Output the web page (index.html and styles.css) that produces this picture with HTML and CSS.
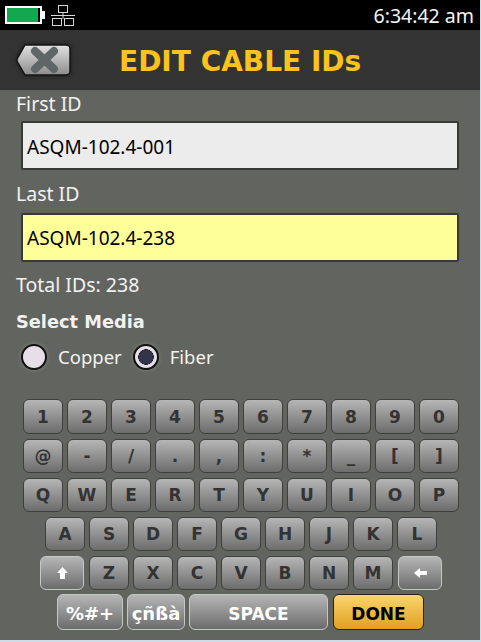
FILE: index.html
```html
<!DOCTYPE html>
<html lang="en">
<head>
  <meta charset="UTF-8">
  <title>Edit Cable IDs</title>
  <link rel="stylesheet" href="styles.css">
</head>
<body>
  <div class="status-bar">
    <div class="battery"><div class="battery-fill"></div></div>
    <svg class="network" width="25" height="21" viewBox="0 0 25 21" fill="none" stroke="#d8d8d8" stroke-width="1">
      <rect x="7.5" y="0.5" width="9" height="7"/>
      <path d="M12 8v6M0 10.5h24"/>
      <rect x="1.5" y="13.5" width="9" height="7"/>
      <rect x="13.5" y="13.5" width="9" height="7"/>
    </svg>
    <div class="clock">6:34:42 am</div>
  </div>

  <div class="title-bar">
    <svg class="back" width="56" height="33" viewBox="0 0 56 33">
      <defs>
        <linearGradient id="backFill" x1="0" y1="0" x2="0" y2="1">
          <stop offset="0" stop-color="#e2e2e2"/>
          <stop offset="1" stop-color="#8c8c8c"/>
        </linearGradient>
      </defs>
      <path d="M9 1H50a4 4 0 0 1 4 4V27a4 4 0 0 1-4 4H9L1.5 18a4 4 0 0 1 0-4z" fill="url(#backFill)" stroke="#141414" stroke-width="1.5"/>
      <path d="M19 7l19 18M38 7L19 25" stroke="#5f6668" stroke-width="8" stroke-linecap="round"/>
    </svg>
    <h1 class="title">EDIT CABLE IDs</h1>
  </div>

  <div class="content">
    <div class="label first-label">First ID</div>
    <div class="field">ASQM-102.4-001</div>
    <div class="label last-label">Last ID</div>
    <div class="field field-active">ASQM-102.4-238</div>
    <div class="label total">Total IDs: 238</div>
    <div class="label media-title">Select Media</div>
    <div class="media-options">
      <div class="radio"></div>
      <div class="label">Copper</div>
      <div class="radio radio-on"></div>
      <div class="label">Fiber</div>
    </div>
  </div>

  <div class="keyboard">
    <div class="key-row row-digits">
      <div class="key">1</div><div class="key">2</div><div class="key">3</div><div class="key">4</div><div class="key">5</div>
      <div class="key">6</div><div class="key">7</div><div class="key">8</div><div class="key">9</div><div class="key">0</div>
    </div>
    <div class="key-row row-digits">
      <div class="key">@</div><div class="key">-</div><div class="key">/</div><div class="key">.</div><div class="key">,</div>
      <div class="key">:</div><div class="key">*</div><div class="key">_</div><div class="key">[</div><div class="key">]</div>
    </div>
    <div class="key-row row-digits">
      <div class="key">Q</div><div class="key">W</div><div class="key">E</div><div class="key">R</div><div class="key">T</div>
      <div class="key">Y</div><div class="key">U</div><div class="key">I</div><div class="key">O</div><div class="key">P</div>
    </div>
    <div class="key-row row-home">
      <div class="key">A</div><div class="key">S</div><div class="key">D</div><div class="key">F</div><div class="key">G</div>
      <div class="key">H</div><div class="key">J</div><div class="key">K</div><div class="key">L</div>
    </div>
    <div class="key-row row-shift">
      <div class="key key-light key-wide">
        <svg width="11" height="12" viewBox="0 0 11 12"><path d="M5.5 0L11 6H8v6H3V6H0z" fill="#fff"/></svg>
      </div>
      <div class="key">Z</div><div class="key">X</div><div class="key">C</div><div class="key">V</div>
      <div class="key">B</div><div class="key">N</div><div class="key">M</div>
      <div class="key key-light key-wide">
        <svg width="13" height="10" viewBox="0 0 13 10"><path d="M0 5L6 0v3h7v4H6v3z" fill="#fff"/></svg>
      </div>
    </div>
    <div class="key-row row-bottom">
      <div class="key key-light key-text key-symbols">%#+</div>
      <div class="key key-light key-text key-accents">çñßà</div>
      <div class="key key-light key-space">SPACE</div>
      <div class="key key-done">DONE</div>
    </div>
  </div>
</body>
</html>
```

FILE: styles.css
```css
html {
  margin: 0;
  width: 481px;
  height: 642px;
  overflow: hidden;
  background-color: #cfdce8;
}

body {
  margin: 0;
  width: 480px;
  height: 640px;
  overflow: hidden;
  background-color: #62645f;
  font-family: "DejaVu Sans", sans-serif;
}

/* Status bar */
.status-bar {
  height: 30px;
  background: #000;
  display: flex;
  align-items: center;
  padding: 0 6px 0 5px;
}

.battery {
  width: 37px;
  height: 18px;
  box-sizing: border-box;
  border: 2px solid #fff;
  padding: 0 2px 0 0;
  position: relative;
  background: #000;
}

.battery::after {
  content: "";
  position: absolute;
  right: -5px;
  top: 3px;
  width: 3px;
  height: 8px;
  background: #fff;
}

.battery-fill {
  height: 100%;
  background: #12a850;
}

.network {
  margin-left: 9px;
}

.clock {
  margin-left: auto;
  color: #f4f4f4;
  font-family: "Noto Sans", sans-serif;
  font-size: 19.5px;
}

/* Title bar */
.title-bar {
  height: 60px;
  background: #333;
  display: flex;
  align-items: center;
  padding-left: 16px;
}

.back {
  filter: drop-shadow(0 0 2px #1c1c1c);
}

.title {
  margin: 2px 0 0 47px;
  color: #fbc31c;
  font-size: 28px;
  font-weight: bold;
}

/* Form */
.content {
  padding-left: 16px;
  height: 309px;
}

.label {
  color: #f2f2f2;
  font-family: "Noto Sans", sans-serif;
  font-size: 19.5px;
  line-height: 22px;
}

.first-label {
  padding-top: 3px;
}

.last-label {
  margin-top: 13px;
}

.field {
  margin: 6px 0 0 5px;
  width: 438px;
  height: 49px;
  box-sizing: border-box;
  border: 2px solid #383a38;
  border-radius: 2px;
  background: #ececec;
  color: #000;
  font-family: "Noto Sans", sans-serif;
  font-size: 19px;
  line-height: 49px;
  padding-left: 4px;
}

.field-active {
  margin-top: 8px;
  background: #ffff99;
  line-height: 47px;
}

.total {
  margin-top: 12px;
}

.media-title {
  font-family: "DejaVu Sans", sans-serif;
  font-size: 17.8px;
  font-weight: bold;
  margin-top: 15px;
}

.media-options {
  display: flex;
  align-items: center;
  margin: 11px 0 0 5px;
}

.media-options .label {
  margin: 0 11px 0 11px;
  font-size: 18.5px;
}

.radio {
  width: 26px;
  height: 26px;
  box-sizing: border-box;
  border: 2px solid #111;
  border-radius: 50%;
  background: #e6dfe8;
  box-shadow: 0 0 4px #7d8a7c;
}

.radio-on {
  background: radial-gradient(circle, #33344a 0 7px, #111 7.5px, #e6dfe8 8px);
}

/* Keyboard */
.keyboard {
  display: flex;
  flex-direction: column;
  gap: 5px;
}

.key-row {
  display: flex;
  gap: 4px;
  height: 34px;
}

.key-row:first-child {
  height: 35px;
}

.row-digits {
  padding-left: 23px;
}

.row-home {
  padding-left: 45px;
}

.row-shift {
  padding-left: 40px;
}

.row-bottom {
  padding-left: 57px;
  height: 36px;
  margin-top: -1px;
}

.key {
  width: 40px;
  box-sizing: border-box;
  border: 1px solid #3f403e;
  border-radius: 6px;
  background: linear-gradient(#b6b6b6, #6c6c6c);
  color: #333;
  font-size: 17px;
  font-weight: bold;
  display: flex;
  align-items: center;
  justify-content: center;
}

.key-wide {
  width: 44px;
}

.row-shift .key-wide:first-child,
.row-shift .key:nth-last-child(2) {
  margin-right: 1px;
}

.row-bottom .key {
  padding-top: 3px;
}

.key-light {
  border-color: #c4c8c4;
  color: #fff;
}

.key-text {
  font-size: 18px;
}

.key-symbols {
  width: 66px;
}

.key-accents {
  width: 58px;
}

.key-space {
  width: 139px;
}

.key-done {
  width: 91px;
  margin-left: 1px;
  border-color: #2a2415;
  background: linear-gradient(#fad56e, #e2a020);
  color: #000;
}

```
